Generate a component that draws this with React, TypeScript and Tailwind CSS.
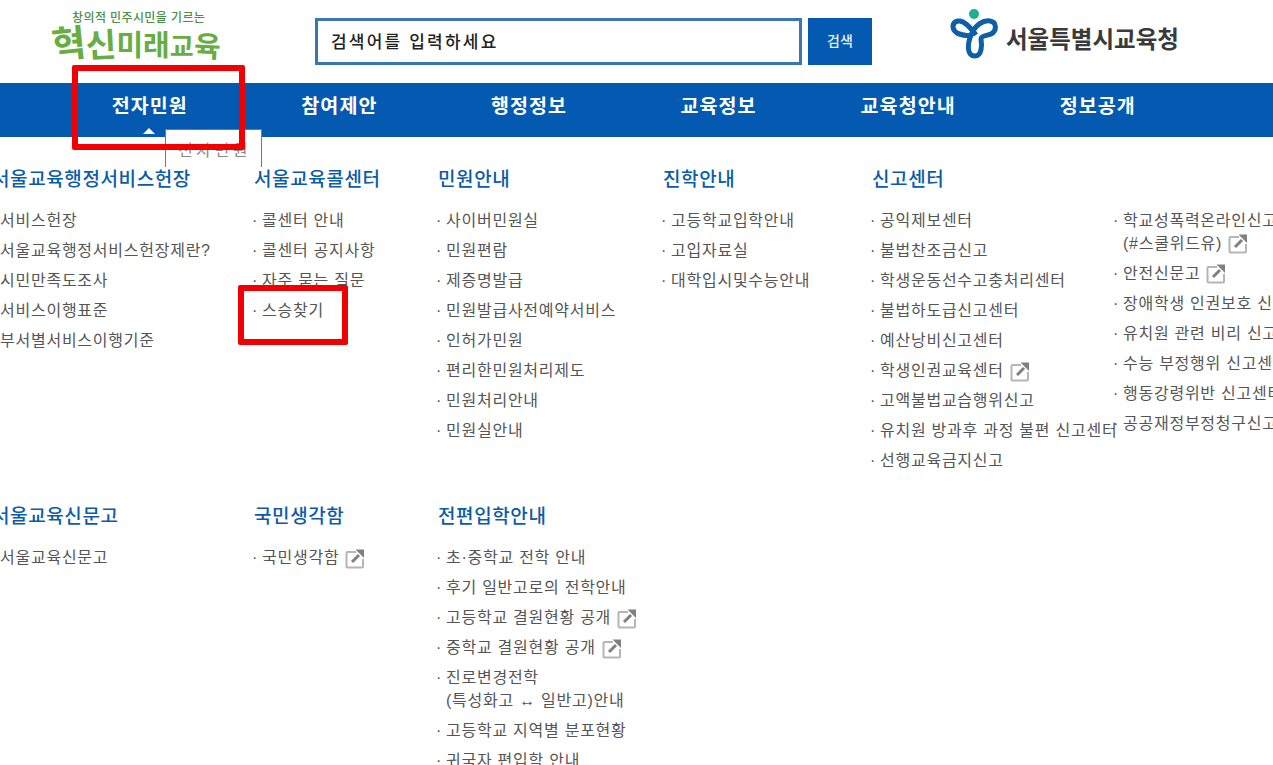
const KR = "font-['Liberation_Sans','Noto_Sans_CJK_KR',sans-serif]";

const NAV = ["전자민원", "참여제안", "행정정보", "교육정보", "교육청안내", "정보공개"];

type Item = { text: string; sub?: string; ext?: boolean };
type Col = { title: string; width: string; items: Item[] };

const t = (text: string, ext = false, sub?: string): Item => ({ text, ext, sub });

const row1: Col[] = [
  {
    title: "서울교육행정서비스헌장",
    width: "w-[262px]",
    items: [t("서비스헌장"), t("서울교육행정서비스헌장제란?"), t("시민만족도조사"), t("서비스이행표준"), t("부서별서비스이행기준")],
  },
  {
    title: "서울교육콜센터",
    width: "w-[184px]",
    items: [t("콜센터 안내"), t("콜센터 공지사항"), t("자주 묻는 질문"), t("스승찾기")],
  },
  {
    title: "민원안내",
    width: "w-[225px]",
    items: [t("사이버민원실"), t("민원편람"), t("제증명발급"), t("민원발급사전예약서비스"), t("인허가민원"), t("편리한민원처리제도"), t("민원처리안내"), t("민원실안내")],
  },
  {
    title: "진학안내",
    width: "w-[209px]",
    items: [t("고등학교입학안내"), t("고입자료실"), t("대학입시및수능안내")],
  },
  {
    title: "신고센터",
    width: "w-[243px]",
    items: [t("공익제보센터"), t("불법찬조금신고"), t("학생운동선수고충처리센터"), t("불법하도급신고센터"), t("예산낭비신고센터"), t("학생인권교육센터", true), t("고액불법교습행위신고"), t("유치원 방과후 과정 불편 신고센터"), t("선행교육금지신고")],
  },
  {
    title: "",
    width: "w-[300px]",
    items: [t("학교성폭력온라인신고", true, "(#스쿨위드유)"), t("안전신문고", true), t("장애학생 인권보호 신고센터"), t("유치원 관련 비리 신고센터"), t("수능 부정행위 신고센터"), t("행동강령위반 신고센터"), t("공공재정부정청구신고")],
  },
];

const row2: Col[] = [
  { title: "서울교육신문고", width: "w-[262px]", items: [t("서울교육신문고")] },
  { title: "국민생각함", width: "w-[184px]", items: [t("국민생각함", true)] },
  {
    title: "전편입학안내",
    width: "w-[225px]",
    items: [t("초·중학교 전학 안내"), t("후기 일반고로의 전학안내"), t("고등학교 결원현황 공개", true), t("중학교 결원현황 공개", true), t("진로변경전학", false, "(특성화고 ↔ 일반고)안내"), t("고등학교 지역별 분포현황"), t("귀국자 편입학 안내")],
  },
];

const ExtIcon = () => (
  <svg width="21" height="21" viewBox="0 0 21 21" className="ml-[5px] -my-[2px] shrink-0" fill="none">
    <path d="M12 4H3.500a1 1 0 0 0-1 1v13.500a1 1 0 0 0 1 1H18a1 1 0 0 0 1-1V11" stroke="#b5b5b5" strokeWidth="2" />
    <path d="M8 14 L15 7" stroke="#808080" strokeWidth="3" />
    <path d="M11.500 1.500 H20 V10 Z" fill="#808080" />
  </svg>
);

const Column = ({ col }: { col: Col }) => (
  <div className={`${col.width} shrink-0`}>
    <h3 className="h-[24px] text-[19px] leading-[24px] font-medium tracking-[0.6px] text-[#0a5ca8] whitespace-nowrap">{col.title}</h3>
    <ul className="mt-[18px]">
      {col.items.map((item) => (
        <li key={item.text} className="flex mb-[7.500px] text-[16px] leading-[22.500px] text-[#555] whitespace-nowrap tracking-[0.75px]">
          <span className="w-[10px] -ml-[2px] shrink-0 tracking-normal">·</span>
          <div>
            <div className="flex items-center">
              {item.text}
              {item.ext && !item.sub && <ExtIcon />}
            </div>
            {item.sub && (
              <div className="flex items-center">
                {item.sub}
                {item.ext && <ExtIcon />}
              </div>
            )}
          </div>
        </li>
      ))}
    </ul>
  </div>
);

const SeoulLogo = () => (
  <svg width="50" height="52" viewBox="0 0 50 52" fill="none">
    <circle cx="24" cy="5" r="5" fill="#1fae8e" />
    <path d="M25 47 C17 47 17 36 21 26 C25 16 33 11 40 12 C47 13 47 22 41 25 C37 27 31 26 31 30 C32 36 32 47 25 47" stroke="#0d5fa8" strokeWidth="5" />
    <path d="M26 26 C20 18 14 11 8 12 C2 13 1 20 7 24 C12 27 17 26 21 27" stroke="#0d5fa8" strokeWidth="5" />
  </svg>
);

export default function App() {
  return (
    <div className={`${KR} relative w-[1273px] h-[765px] overflow-hidden bg-white`}>
      <header className="flex h-[83px]">
        <div className="w-[315px] shrink-0 pl-[52px] pt-[11px] text-[#68ad42]">
          <div className="ml-[20px] text-[12px] leading-[15px] font-medium tracking-[0.4px] text-[#4d8f45] whitespace-nowrap">창의적 민주시민을 기르는</div>
          <div className="flex items-end h-[38px] font-bold whitespace-nowrap">
            <span className="text-[37px] leading-[38px] -rotate-6">혁</span>
            <span className="text-[33px] leading-[36px] -rotate-3">신</span>
            <span className="text-[29px] leading-[36px]">미</span>
            <span className="text-[29px] leading-[36px]">래</span>
            <span className="text-[26px] leading-[34px]">교</span>
            <span className="text-[29px] leading-[34px] rotate-3">육</span>
          </div>
        </div>
        <div className="flex pt-[18px]">
          <div className="flex items-center w-[487px] h-[47px] border-[3px] border-[#3a76b0] pl-[13px] pt-[3px] text-[17px] font-medium tracking-[2.2px] text-[#222]">
            검색어를 입력하세요
          </div>
          <button className="ml-[6px] w-[64px] h-[47px] bg-[#045ab0] text-[14px] font-medium text-[#e6eef7]">검색</button>
        </div>
        <div className="flex ml-[78px] pt-[9px]">
          <SeoulLogo />
          <span className="ml-[6px] mt-[15px] text-[23.500px] leading-[32px] font-bold text-[#3a3a3a] whitespace-nowrap">서울특별시교육청</span>
        </div>
      </header>

      <nav className="flex h-[54px] pl-[55px] bg-[#045ab0]">
        {NAV.map((name, i) => (
          <div key={name} className="relative w-[189.600px] text-center text-[19.500px] leading-[47px] font-bold tracking-[1.1px] text-white">
            {name}
            {i === 0 && <div className="absolute left-1/2 bottom-[3px] -ml-[1px] -translate-x-1/2 w-0 h-0 border-x-[6px] border-x-transparent border-b-[6px] border-b-white" />}
          </div>
        ))}
      </nav>

      <main className="ml-[-8px]">
        <section className="flex h-[368px] pt-[31px]">
          {row1.map((col) => (
            <Column key={col.title || "etc"} col={col} />
          ))}
        </section>
        <section className="flex">
          {row2.map((col) => (
            <Column key={col.title} col={col} />
          ))}
        </section>
      </main>

      {/* tooltip */}
      <div className="absolute left-[165px] top-[129px] w-[97px] h-[38px] bg-white border-x border-t border-[#777] pl-[12px] pt-[10px] text-[16px] leading-[22px] tracking-[3.500px] text-[#888] whitespace-nowrap">
        전자민원
      </div>

      {/* red highlight boxes */}
      <div className="absolute left-[72px] top-[65px] w-[173px] h-[85px] border-[6px] border-[#f00000] rounded-[2px]" />
      <div className="absolute left-[238px] top-[285px] w-[110px] h-[60px] border-[6px] border-[#f00000] rounded-[2px]" />
    </div>
  );
}
